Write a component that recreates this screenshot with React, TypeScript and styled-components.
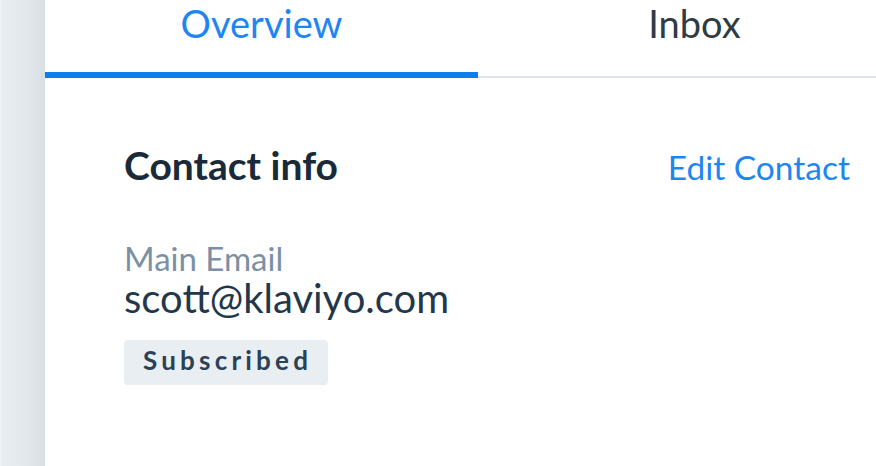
import React from 'react';
import styled, { createGlobalStyle } from 'styled-components';

const GlobalStyle = createGlobalStyle`
  html, body {
    margin: 0;
    padding: 0;
    background: #ffffff;
  }
  body {
    font-family: Lato, "Open Sans", sans-serif;
    overflow: hidden;
  }
`;

const Page = styled.div`
  display: flex;
  width: 876px;
  height: 466px;
  overflow: hidden;
`;

const SideStrip = styled.div`
  flex: 0 0 45px;
  height: 100%;
  background: linear-gradient(to right, #f1f4f7 0%, #e8edf2 6%, #e3e8ed 60%, #d8dee2 100%);
`;

const Main = styled.div`
  flex: 1;
  min-width: 0;
  display: flex;
  flex-direction: column;
`;

const TabBar = styled.div`
  display: flex;
  width: 866px;
  flex-shrink: 0;
`;

const Tab = styled.div<{ $active?: boolean }>`
  flex: 0 0 433px;
  height: 78px;
  box-sizing: border-box;
  display: flex;
  justify-content: center;
  align-items: flex-end;
  padding-bottom: ${({ $active }) => ($active ? '26px' : '30px')};
  font-size: 38px;
  color: ${({ $active }) => ($active ? '#1e86f2' : '#2f3b45')};
  border-bottom: ${({ $active }) => ($active ? '6px solid #0b7ff0' : '2px solid #dde4ea')};
`;

const Content = styled.div`
  padding: 64px 26px 0 79px;
`;

const HeaderRow = styled.div`
  display: flex;
  justify-content: space-between;
  align-items: baseline;
`;

const Title = styled.div`
  font-size: 39px;
  line-height: 47px;
  font-weight: 700;
  color: #1b2a38;
`;

const EditLink = styled.a`
  font-size: 33.5px;
  color: #1e86f2;
  text-decoration: none;
`;

const FieldLabel = styled.div`
  margin-top: 51px;
  font-size: 33px;
  line-height: 36px;
  color: #7b90a5;
`;

const FieldValue = styled.div`
  margin-top: 2px;
  font-size: 40px;
  line-height: 40px;
  color: #22374a;
`;

const Badge = styled.span`
  display: block;
  width: fit-content;
  margin-top: 22px;
  padding: 7px 16px 11px 19px;
  line-height: 27px;
  border-radius: 4px;
  background: #e9eef3;
  color: #2b4156;
  font-size: 26px;
  font-weight: 700;
  letter-spacing: 4.2px;
`;

export default function App() {
  return (
    <>
      <GlobalStyle />
      <Page>
        <SideStrip />
        <Main>
          <TabBar>
            <Tab $active>Overview</Tab>
            <Tab>Inbox</Tab>
          </TabBar>
          <Content>
            <HeaderRow>
              <Title>Contact info</Title>
              <EditLink href="#">Edit Contact</EditLink>
            </HeaderRow>
            <FieldLabel>Main Email</FieldLabel>
            <FieldValue>scott@klaviyo.com</FieldValue>
            <Badge>Subscribed</Badge>
          </Content>
        </Main>
      </Page>
    </>
  );
}
